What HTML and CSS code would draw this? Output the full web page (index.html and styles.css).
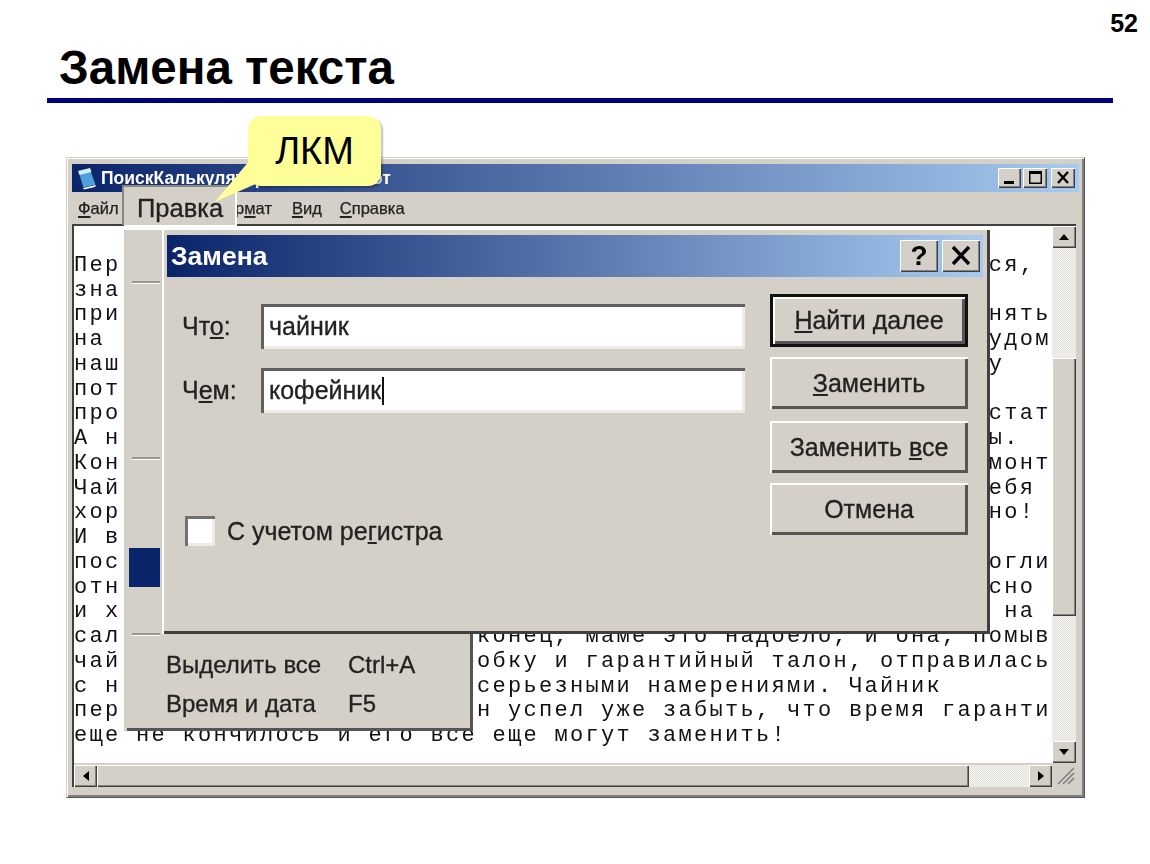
FILE: index.html
```html
<!DOCTYPE html>
<html lang="ru">
<head>
<meta charset="utf-8">
<title>Замена текста</title>
<link rel="stylesheet" href="styles.css">
</head>
<body>
<main class="slide">
  <div class="page-number">52</div>
  <header class="slide-head">
    <h1 class="slide-title">Замена текста</h1>
    <div class="slide-rule"></div>
  </header>

  <section class="window notepad">
    <div class="titlebar notepad-title">
      <svg class="app-icon" viewBox="0 0 20 24" width="20" height="24"><path d="M1 5 L13 2 L19 19 L6 22 Z" fill="#4f9fdc" stroke="#10305f" stroke-width="1"/><path d="M1 5 L13 2 L14.5 6 L2.5 9 Z" fill="#d5ecfa"/><path d="M6 22 L19 19 L18 21 L7 23.5 Z" fill="#fff"/></svg>
      <span class="notepad-caption">ПоискКалькулятора - Блокнот</span>
      <div class="win-controls">
        <span class="ctl"><svg viewBox="0 0 22 20" width="22" height="20"><rect x="5" y="13" width="10" height="3" fill="#000"/></svg></span>
        <span class="ctl ctl-wide"><svg viewBox="0 0 24 20" width="24" height="20"><path d="M6 3 H19 V16 H6 Z M7.5 6 V14.5 H17.5 V6 Z" fill="#000" fill-rule="evenodd"/></svg></span>
        <span class="ctl ctl-wide ctl-gap"><svg viewBox="0 0 24 20" width="24" height="20"><path d="M7 4 L17 15 M17 4 L7 15" stroke="#000" stroke-width="2.4"/></svg></span>
      </div>
    </div>
    <nav class="menubar">
      <span class="menu-item"><u>Ф</u>айл</span>
      <span class="menu-item menu-spaced">Правка</span>
      <span class="menu-item menu-format">Фор<u>м</u>ат</span>
      <span class="menu-item"><u>В</u>ид</span>
      <span class="menu-item"><u>С</u>правка</span>
    </nav>
    <div class="client">
      <pre class="editor-text">

Пер                                                        ся,
зна
при                                                        нять
на                                                         удом
наш                                                        у
пот
про                                                        стат
А н                                                        ы.
Кон                                                        монт
Чай                                                        ебя
хор                                                        но!
И в
пос                                                        огли
отн                                                        сно
и х                                                         на
сал                       конец, маме это надоело, и она, помыв
чай                      робку и гарантийный талон, отправилась
с н                       серьезными намерениями. Чайник
пер                       н успел уже забыть, что время гаранти
еще не кончилось и его все еще могут заменить!</pre>
      <div class="vscroll">
        <span class="sbtn sbtn-v"><svg viewBox="0 0 12 8" width="12" height="8"><path d="M6 1 L11 7 H1 Z" fill="#000"/></svg></span>
        <span class="track track-a"></span>
        <span class="thumb-v"></span>
        <span class="track"></span>
        <span class="sbtn sbtn-v"><svg viewBox="0 0 12 8" width="12" height="8"><path d="M1 1 H11 L6 7 Z" fill="#000"/></svg></span>
      </div>
      <div class="hscroll">
        <span class="sbtn sbtn-h"><svg viewBox="0 0 8 12" width="8" height="12"><path d="M7 1 V11 L1 6 Z" fill="#000"/></svg></span>
        <span class="thumb-h"></span>
        <span class="track"></span>
        <span class="sbtn sbtn-h"><svg viewBox="0 0 8 12" width="8" height="12"><path d="M1 1 L7 6 L1 11 Z" fill="#000"/></svg></span>
      </div>
      <div class="grip"><svg viewBox="0 0 24 22" width="24" height="22"><path d="M6 21 L22 5 M11 21 L22 10 M16 21 L22 15" stroke="#808080" stroke-width="1.6"/></svg></div>
    </div>
  </section>

  <section class="dropdown">
    <div class="dropdown-strip">
      <span class="strip-sep strip-sep-1"></span>
      <span class="strip-sep strip-sep-2"></span>
      <span class="strip-active"></span>
      <span class="strip-sep strip-sep-3"></span>
    </div>
    <div class="dropdown-items">
      <div class="dropdown-item"><span class="item-label">Выделить все</span><span>Ctrl+A</span></div>
      <div class="dropdown-item"><span class="item-label">Время и дата</span><span>F5</span></div>
    </div>
  </section>

  <div class="menu-open">Правка</div>

  <section class="window dialog">
    <div class="titlebar dialog-title">
      <span class="dialog-caption">Замена</span>
      <div class="dialog-controls">
        <span class="ctl ctl-big help">?</span>
        <span class="ctl ctl-big"><svg viewBox="0 0 38 32" width="38" height="32"><path d="M11 7 L27 24 M27 7 L11 24" stroke="#000" stroke-width="3.4"/></svg></span>
      </div>
    </div>
    <div class="dialog-body">
      <div class="fields">
        <div class="field">
          <span class="field-label">Чт<u>о</u>:</span>
          <div class="input">чайник</div>
        </div>
        <div class="field">
          <span class="field-label">Ч<u>е</u>м:</span>
          <div class="input input-focus">кофейник<span class="caret"></span></div>
        </div>
        <label class="check-row">
          <span class="checkbox"></span>
          <span>С учетом ре<u>г</u>истра</span>
        </label>
      </div>
      <div class="buttons">
        <div class="btn btn-default"><span><u>Н</u>айти далее</span></div>
        <div class="btn"><span><u>З</u>аменить</span></div>
        <div class="btn"><span>Заменить <u>в</u>се</span></div>
        <div class="btn"><span>Отмена</span></div>
      </div>
    </div>
  </section>

  <div class="callout">
    <svg class="callout-tail" viewBox="0 0 60 50" width="60" height="50"><path d="M36 0 L1 42 L46 22 Z" fill="#ffff99"/></svg>
    <span class="callout-text">ЛКМ</span>
  </div>
</main>
</body>
</html>
```
FILE: styles.css
```css
* { box-sizing: border-box; }
html, body { margin: 0; padding: 0; background: #fff; }
body { font-family: "Liberation Sans", Arial, sans-serif; color: #000; }
u { text-underline-offset: 2px; text-decoration-thickness: 1.5px; }

.slide { position: relative; width: 1150px; height: 864px; overflow: hidden; background: #fff; }

.page-number { position: absolute; right: 12px; top: 8px; font-size: 25px; font-weight: 700; line-height: 30px; }
.slide-head { padding: 40px 37px 0 47px; }
.slide-title { margin: 0; padding-left: 12px; font-size: 47.5px; font-weight: 700; line-height: 56px; height: 58px; }
.slide-rule { height: 5px; background: #00007f; }

.window { background: #d4d0c8; position: absolute; display: flex; flex-direction: column; filter: blur(0.45px); }
.notepad {
  left: 66px; top: 157px; width: 1019px; height: 641px; padding: 6px 5px 5px;
  border: 1px solid #d4d0c8; border-right-color: #555; border-bottom-color: #555;
  box-shadow: inset 1px 1px 0 #fff, inset -2px -2px 0 #808080;
}
.titlebar { display: flex; align-items: center; background: linear-gradient(90deg, #0a246a, #a6caf0); color: #fff; font-weight: 700; }
.notepad-title { height: 28px; padding: 0 4px 0 5px; flex: none; }
.app-icon { flex: none; margin-right: 4px; }
.notepad-caption { font-size: 17.5px; white-space: nowrap; word-spacing: 14px; }
.win-controls { margin-left: auto; display: flex; gap: 2px; }
.ctl {
  display: flex; align-items: center; justify-content: center; background: #d4d0c8;
  box-shadow: inset 1px 1px 0 #fff, inset -1px -1px 0 #404040, inset -2px -2px 0 #808080;
  width: 23px; height: 20px; color: #000;
}
.ctl-wide { width: 24px; }
.ctl-gap { margin-left: 2px; }

.menubar { flex: none; height: 32px; display: flex; align-items: center; padding: 0 0 0 6px; font-size: 16.5px; font-weight: 400; color: #222; -webkit-text-stroke: 0.25px #222; }
.menu-item { margin-right: 18px; white-space: nowrap; }
.menu-spaced { margin-right: 21px; }
.menu-format { margin-right: 20px; }

.client {
  flex: 1; margin: 0 3px 5px 0; display: grid; grid-template-columns: 1fr 24px; grid-template-rows: 1fr 24px;
  box-shadow: inset 2px 2px 0 #404040; padding: 2px 0 0 2px; min-height: 0;
}
.editor-text {
  margin: 0; background: #fff; overflow: hidden; padding: 3px 0 0 0;
  font-family: "Liberation Mono", "DejaVu Sans Mono", monospace; font-size: 22px; letter-spacing: 2.3px;
  line-height: 24.75px; color: #111; white-space: pre; min-width: 0;
}
.vscroll { display: flex; flex-direction: column; grid-column: 2; grid-row: 1; }
.hscroll { display: flex; grid-column: 1; grid-row: 2; padding-top: 2px; }
.sbtn {
  flex: none; display: flex; align-items: center; justify-content: center; background: #d4d0c8;
  box-shadow: inset 1px 1px 0 #fff, inset -1px -1px 0 #404040, inset -2px -2px 0 #808080;
}
.sbtn-v { height: 22px; }
.sbtn-h { width: 23px; }
.track { flex: 1; background: repeating-conic-gradient(#f6f5f2 0 25%, #e2e0da 0 50%) 0 0 / 2px 2px; }
.track-a { flex: 0 0 110px; }
.thumb-v { flex: 0 0 258px; background: #d4d0c8; box-shadow: inset 1px 1px 0 #fff, inset -1px -1px 0 #404040, inset -2px -2px 0 #808080; }
.thumb-h { flex: 0 0 872px; background: #d4d0c8; box-shadow: inset 1px 1px 0 #fff, inset -1px -1px 0 #404040, inset -2px -2px 0 #808080; }
.grip { grid-column: 2; grid-row: 2; background: #d4d0c8; }

.dropdown {
  position: absolute; left: 122px; top: 228px; width: 351px; height: 503px; background: #d4d0c8;
  display: flex; box-shadow: inset 2px 2px 0 #fff, inset 5px 5px 0 #d4d0c8, inset -3px -3px 0 #555; filter: blur(0.45px);
}
.dropdown-strip { position: relative; width: 38px; flex: none; }
.strip-sep { position: absolute; left: 10px; width: 28px; height: 2px; background: #9a978f; box-shadow: 0 1px 0 #fff; }
.strip-sep-1 { top: 53px; }
.strip-sep-2 { top: 229px; }
.strip-sep-3 { top: 405px; }
.strip-active { position: absolute; left: 7px; top: 320px; width: 31px; height: 39px; background: #0a246a; }
.dropdown-items { margin: 417px 0 0 6px; font-size: 24px; color: #222; -webkit-text-stroke: 0.3px #222; }
.dropdown-item { display: flex; height: 39.5px; align-items: center; white-space: nowrap; }
.item-label { width: 182px; }

.menu-open {
  position: absolute; left: 122px; top: 185px; width: 113px; height: 40px; padding: 8px 0 0 15px; background: #d4d0c8;
  font-size: 25.5px; line-height: 30px; color: #222; -webkit-text-stroke: 0.3px #222; box-shadow: inset 2px 2px 0 #8a8780, 2px 2px 0 #fff; filter: blur(0.45px);
}

.dialog {
  left: 162px; top: 228px; width: 828px; height: 406px; padding: 7px 7px 5px 5px;
  box-shadow: inset 2px 2px 0 #fff, inset -3px -3px 0 #404040;
}
.dialog-title { height: 42px; flex: none; padding: 0 3px 0 4px; }
.dialog-caption { font-size: 26.5px; }
.dialog-controls { margin-left: auto; display: flex; gap: 4px; }
.ctl-big { width: 38px; height: 32px; }
.help { font-size: 28px; font-weight: 700; }
.dialog-body { flex: 1; display: flex; padding: 17px 0 0 15px; font-size: 25px; color: #222; -webkit-text-stroke: 0.3px #222; }
.fields { width: 588px; flex: none; padding-top: 10px; }
.field { display: flex; align-items: center; height: 45px; margin-bottom: 19px; }
.field-label { width: 79px; flex: none; }
.input {
  width: 484px; height: 45px; background: #fff; color: #222; padding: 5px 0 0 8px; display: flex; align-items: flex-start; line-height: 34px;
  box-shadow: inset 3px 3px 0 #606060, inset -3px -3px 0 #ecebe6;
}
.caret { width: 2px; height: 28px; background: #111; margin: 4px 0 0 1px; }
.check-row { display: flex; align-items: center; gap: 12px; margin: 103px 0 0 3px; }
.checkbox { width: 30px; height: 30px; background: #fff; box-shadow: inset 3px 3px 0 #707070, inset -3px -3px 0 #ecebe6; }
.buttons { width: 198px; display: flex; flex-direction: column; gap: 10px; }
.btn {
  height: 52px; display: flex; align-items: center; justify-content: center; background: #d4d0c8; white-space: nowrap;
  box-shadow: inset 2px 2px 0 #fff, inset -3px -3px 0 #555;
}
.btn:nth-child(3) { margin-top: 2px; }
.btn-default { height: 53px; box-shadow: inset 0 0 0 3px #111, inset 5px 5px 0 #fff, inset -6px -6px 0 #555; }

.callout {
  position: absolute; left: 248px; top: 116px; width: 133px; height: 70px; background: #ffff99; border-radius: 13px;
  display: flex; align-items: center; justify-content: center; box-shadow: 2px 2px 2px rgba(0,0,0,.25);
}
.callout-text { font-size: 38px; line-height: 1; position: relative; }
.callout-tail { position: absolute; left: -34px; top: 44px; }
```
